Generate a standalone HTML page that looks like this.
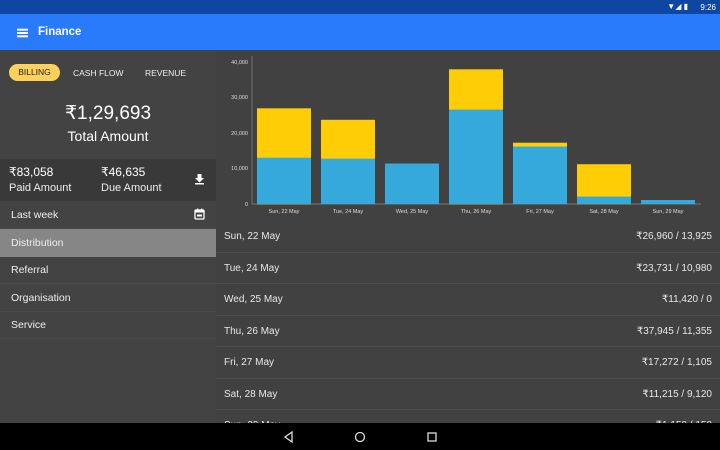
<!DOCTYPE html>
<html><head><meta charset="utf-8"><style>
*{margin:0;padding:0;box-sizing:border-box}
body{width:720px;height:450px;overflow:hidden;background:#414141;font-family:"Liberation Sans",sans-serif;color:#fff;position:relative}
.a{position:absolute}
.row{position:absolute;left:216px;width:504px;height:31.5px;border-bottom:1px solid #4c4c4c;font-size:10px;color:#e8e8e8}
.row span{position:absolute;top:10px}
.row .l{left:8px}.row .r{right:8px}
.nav{position:absolute;left:0;width:216px;height:27.5px;border-bottom:1px solid #4a4a4a;font-size:10.5px;color:#eee}
.nav span{position:absolute;left:11px;top:8px}
</style></head><body>
<div class="a" style="left:0;top:0;width:720px;height:14px;background:#0d47a1"></div>
<div class="a" style="right:32px;top:2px;font-size:8px;color:#fff">▼◢ ▮</div>
<div class="a" style="right:4px;top:3px;font-size:8px;color:#fff">9:26</div>
<div class="a" style="left:0;top:14px;width:720px;height:36px;background:#2a7bfc"></div>
<div class="a" style="left:17px;top:32px;width:11px;height:1.5px;background:#fff;box-shadow:0 -3.3px 0 #fff,0 3.3px 0 #fff"></div>
<div class="a" style="left:38px;top:26px;font-size:11.5px;font-weight:bold">Finance</div>

<div class="a" style="left:0;top:50px;width:216px;height:373px;background:#434343"></div>
<div class="a" style="left:9px;top:64px;width:51px;height:17px;border-radius:9px;background:#fdd15b;color:#222;font-size:8.5px;text-align:center;line-height:17px">BILLING</div>
<div class="a" style="left:73px;top:68px;font-size:8.5px;color:#eee">CASH FLOW</div>
<div class="a" style="left:145px;top:68px;font-size:8.5px;color:#eee">REVENUE</div>
<div class="a" style="left:0;top:102px;width:216px;text-align:center;font-size:19px">₹1,29,693</div>
<div class="a" style="left:0;top:128px;width:216px;text-align:center;font-size:14px">Total Amount</div>
<div class="a" style="left:0;top:159px;width:216px;height:42px;background:#393939"></div>
<div class="a" style="left:9px;top:165px;font-size:12px">₹83,058</div>
<div class="a" style="left:9px;top:182px;font-size:11px;color:#eee">Paid Amount</div>
<div class="a" style="left:101px;top:165px;font-size:12px">₹46,635</div>
<div class="a" style="left:101px;top:182px;font-size:11px;color:#eee">Due Amount</div>
<svg class="a" style="left:194px;top:173px" width="11" height="12" viewBox="0 0 11 12"><path d="M3.5 1h4v4h2.5l-4.5 4.5L1 5h2.5z" fill="#fff"/><rect x="1" y="10" width="9" height="1.5" fill="#fff"/></svg>
<div class="nav" style="top:201px"><span>Last week</span></div>
<svg class="a" style="left:194px;top:208px" width="11" height="12" viewBox="0 0 11 12"><rect x="1" y="2" width="9" height="9" rx="1" fill="none" stroke="#fff" stroke-width="1.3"/><rect x="1" y="2" width="9" height="2.5" fill="#fff"/><rect x="3" y="6.5" width="5" height="2" fill="#fff"/><rect x="3" y="0.5" width="1.2" height="2" fill="#fff"/><rect x="7" y="0.5" width="1.2" height="2" fill="#fff"/></svg>
<div class="nav" style="top:229px;background:#868686;border:none"><span>Distribution</span></div>
<div class="nav" style="top:256px"><span>Referral</span></div>
<div class="nav" style="top:284px"><span>Organisation</span></div>
<div class="nav" style="top:311px"><span>Service</span></div>

<svg class="a" style="left:216px;top:50px" width="504" height="171" viewBox="216 50 504 171">
<g font-family="Liberation Sans" font-size="5.5" fill="#ddd" text-anchor="end">
<text x="248" y="64">40,000</text><text x="248" y="99">30,000</text><text x="248" y="135">20,000</text><text x="248" y="170">10,000</text><text x="248" y="206">0</text></g>
<line x1="252" y1="56" x2="252" y2="204" stroke="#888" stroke-width="0.7"/>
<line x1="252" y1="204" x2="701" y2="204" stroke="#888" stroke-width="0.7"/>
<g fill="#fecd06">
<rect x="257" y="108.3" width="54" height="96"/><rect x="321" y="119.8" width="54" height="84"/><rect x="449" y="69.3" width="54" height="135"/><rect x="513" y="142.7" width="54" height="61"/><rect x="577" y="164.2" width="54" height="40"/></g>
<g fill="#35a8dc">
<rect x="257" y="157.7" width="54" height="46.3"/><rect x="321" y="158.7" width="54" height="45.3"/><rect x="385" y="163.5" width="54" height="40.5"/><rect x="449" y="109.6" width="54" height="94.4"/><rect x="513" y="146.6" width="54" height="57.4"/><rect x="577" y="196.6" width="54" height="7.4"/><rect x="641" y="200" width="54" height="4"/></g>
<g font-family="Liberation Sans" font-size="5.5" fill="#ddd" text-anchor="middle">
<text x="284" y="213">Sun, 22 May</text><text x="348" y="213">Tue, 24 May</text><text x="412" y="213">Wed, 25 May</text><text x="476" y="213">Thu, 26 May</text><text x="540" y="213">Fri, 27 May</text><text x="604" y="213">Sat, 28 May</text><text x="668" y="213">Sun, 29 May</text></g>
</svg>

<div class="row" style="top:221px"><span class="l">Sun, 22 May</span><span class="r">₹26,960 / 13,925</span></div>
<div class="row" style="top:252.5px"><span class="l">Tue, 24 May</span><span class="r">₹23,731 / 10,980</span></div>
<div class="row" style="top:284px"><span class="l">Wed, 25 May</span><span class="r">₹11,420 / 0</span></div>
<div class="row" style="top:315.5px"><span class="l">Thu, 26 May</span><span class="r">₹37,945 / 11,355</span></div>
<div class="row" style="top:347px"><span class="l">Fri, 27 May</span><span class="r">₹17,272 / 1,105</span></div>
<div class="row" style="top:378.5px"><span class="l">Sat, 28 May</span><span class="r">₹11,215 / 9,120</span></div>
<div class="row" style="top:410px"><span class="l">Sun, 29 May</span><span class="r">₹1,150 / 150</span></div>

<div class="a" style="left:0;top:423px;width:720px;height:27px;background:#000"></div>
<svg class="a" style="left:280px;top:430px" width="160" height="14" viewBox="0 0 160 14">
<path d="M12 2L5 7l7 5z" fill="none" stroke="#ddd" stroke-width="1.3"/>
<circle cx="80" cy="7" r="4.5" fill="none" stroke="#ddd" stroke-width="1.3"/>
<rect x="148" y="3" width="8" height="8" fill="none" stroke="#ddd" stroke-width="1.3"/>
</svg>
</body></html>
